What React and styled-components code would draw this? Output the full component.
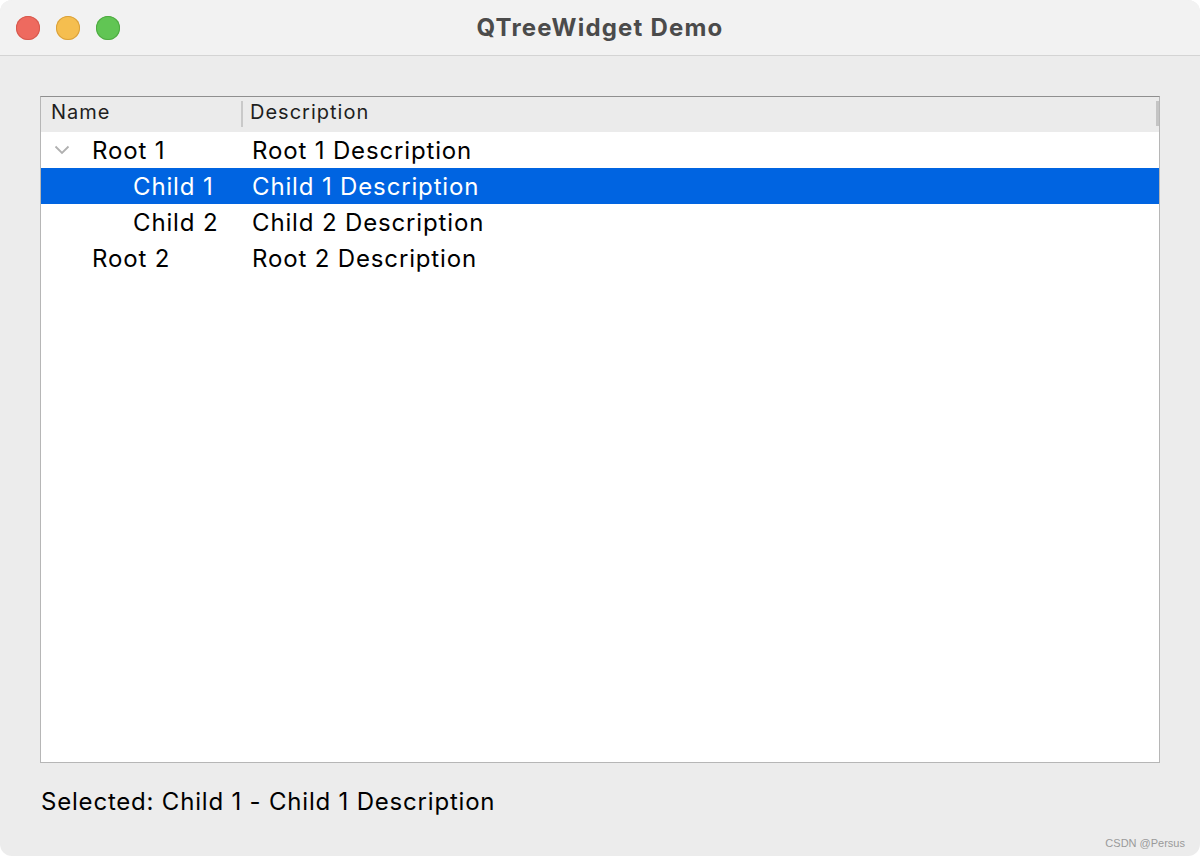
import React from 'react';
import styled, { createGlobalStyle } from 'styled-components';

const GlobalStyle = createGlobalStyle`
  html, body {
    margin: 0;
    padding: 0;
    background: #ffffff;
  }
  body {
    font-family: Inter, "Liberation Sans", sans-serif;
  }
`;

// window frame
const Window = styled.div`
  width: 1200px;
  height: 856px;
  display: flex;
  flex-direction: column;
  background: #ececec;
  border-radius: 12px;
  overflow: hidden;
  box-sizing: border-box;
`;

const TitleBar = styled.div`
  height: 56px;
  flex: none;
  display: flex;
  align-items: center;
  position: relative;
  background: #f2f2f2;
  border-bottom: 1px solid #d4d4d4;
  box-sizing: border-box;
`;

const Lights = styled.div`
  display: flex;
  gap: 16px;
  padding-left: 16px;
`;

const Light = styled.span`
  width: 24px;
  height: 24px;
  border-radius: 50%;
  background: ${p => p.$color};
  box-shadow: inset 0 0 0 1px ${p => p.$edge};
`;

const Title = styled.div`
  position: absolute;
  left: 0;
  right: 0;
  text-align: center;
  font-size: 24px;
  font-weight: 700;
  letter-spacing: 1.2px;
  color: #4b4b4b;
  pointer-events: none;
`;

const Content = styled.div`
  flex: 1;
  display: flex;
  flex-direction: column;
  padding: 40px 40px 0 40px;
  position: relative;
`;

// tree widget
const Tree = styled.div`
  height: 667px;
  display: flex;
  flex-direction: column;
  background: #ffffff;
  border: 1px solid #b6b6b6;
  border-top-color: #8f8f8f;
  box-sizing: border-box;
`;

const Header = styled.div`
  height: 35px;
  flex: none;
  display: flex;
  align-items: center;
  background: #ebebeb;
  position: relative;
  font-size: 20px;
  letter-spacing: 1px;
  color: #1e1e1e;
`;

const HeaderCell = styled.div`
  width: ${p => p.$width || 'auto'};
  flex: ${p => (p.$width ? 'none' : '1')};
  padding-left: ${p => (p.$divider ? '7px' : '10px')};
  padding-bottom: 3px;
  margin-bottom: 2px;
  box-sizing: border-box;
  height: 26px;
  display: flex;
  align-items: center;
  border-left: ${p => (p.$divider ? '2px solid #c9c9c9' : 'none')};
`;

const HeaderGrip = styled.span`
  position: absolute;
  right: 0;
  top: 4px;
  width: 3px;
  height: 25px;
  background: #c4c4c4;
`;

const Row = styled.div`
  height: 36px;
  display: flex;
  align-items: center;
  font-size: 24px;
  letter-spacing: 0.85px;
  background: ${p => (p.$selected ? '#0064e1' : 'transparent')};
  color: ${p => (p.$selected ? '#ffffff' : '#000000')};
`;

const NameCell = styled.div`
  width: 211px;
  flex: none;
  display: flex;
  align-items: center;
  padding-left: ${p => p.$indent}px;
  box-sizing: border-box;
`;

const Arrow = styled.span`
  width: 51px;
  flex: none;
  display: flex;
  align-items: center;
  padding-left: 13px;
  box-sizing: border-box;
`;

const DescCell = styled.div`
  flex: 1;
`;

const Status = styled.div`
  height: 76px;
  display: flex;
  align-items: center;
  font-size: 24px;
  letter-spacing: 0.8px;
  color: #000000;
  padding-left: 1px;
`;

const Watermark = styled.div`
  position: absolute;
  right: 15px;
  bottom: 7px;
  font-family: "Liberation Sans", sans-serif;
  font-size: 11px;
  color: #9a9a9a;
`;

const Chevron = () => (
  <svg width="16" height="10" viewBox="0 0 16 10">
    <path d="M1.5 1.5 L8 8 L14.5 1.5" fill="none" stroke="#b0b0b0" strokeWidth="1.8" />
  </svg>
);

const rows = [
  { name: 'Root 1', desc: 'Root 1 Description', level: 0, open: true },
  { name: 'Child 1', desc: 'Child 1 Description', level: 1, selected: true },
  { name: 'Child 2', desc: 'Child 2 Description', level: 1 },
  { name: 'Root 2', desc: 'Root 2 Description', level: 0 },
];

export default function App() {
  return (
    <>
      <GlobalStyle />
      <Window>
        <TitleBar>
          <Lights>
            <Light $color="#ee6a5f" $edge="#d65a4f" />
            <Light $color="#f5be4f" $edge="#d9a13c" />
            <Light $color="#61c554" $edge="#4faa42" />
          </Lights>
          <Title>QTreeWidget Demo</Title>
        </TitleBar>
        <Content>
          <Tree>
            <Header>
              <HeaderCell $width="200px">Name</HeaderCell>
              <HeaderCell $divider>Description</HeaderCell>
              <HeaderGrip />
            </Header>
            {rows.map(r => (
              <Row key={r.name} $selected={r.selected}>
                <NameCell $indent={r.level * 41}>
                  <Arrow>{r.open ? <Chevron /> : null}</Arrow>
                  {r.name}
                </NameCell>
                <DescCell>{r.desc}</DescCell>
              </Row>
            ))}
          </Tree>
          <Status>Selected: Child 1 - Child 1 Description</Status>
          <Watermark>CSDN @Persus</Watermark>
        </Content>
      </Window>
    </>
  );
}
